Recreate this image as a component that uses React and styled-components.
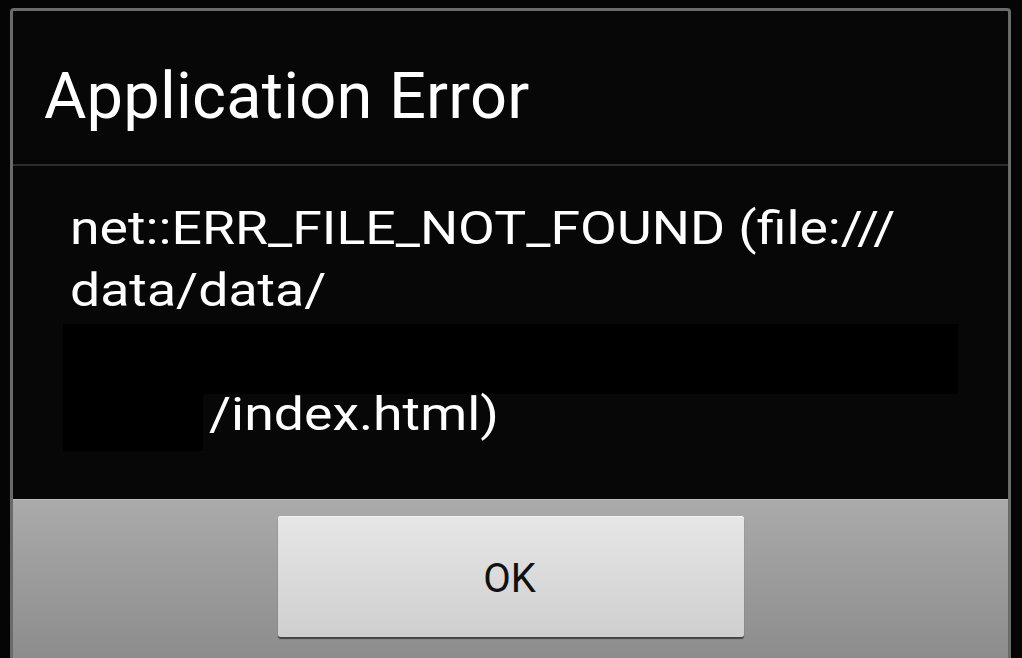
import React from "react";
import styled, { createGlobalStyle } from "styled-components";

const Global = createGlobalStyle`
  html, body {
    margin: 0;
    padding: 0;
    height: 100%;
    overflow: hidden;
    background: #050505;
  }
  body {
    font-family: Roboto, "Noto Sans", "Liberation Sans", sans-serif;
  }
`;

const Screen = styled.div`
  width: 1022px;
  height: 658px;
  padding: 8px 11px 0 10px;
  box-sizing: border-box;
  background: #050505;
  overflow: hidden;
`;

const Dialog = styled.div`
  display: flex;
  flex-direction: column;
  border: 3px solid #6b6b6b;
  border-bottom: none;
  border-radius: 4px 4px 0 0;
  background: #070707;
  height: 720px;
  box-sizing: border-box;
`;

const TitleBar = styled.div`
  height: 155px;
  box-sizing: border-box;
  padding: 53px 0 0 31px;
  border-bottom: 2px solid #2c2c2c;
  color: #ffffff;
  font-size: 65px;
  line-height: 1;
  font-weight: 400;
  letter-spacing: 0.2px;
  white-space: nowrap;
`;

const Body = styled.div`
  height: 333px;
  box-sizing: border-box;
  padding: 31px 40px 0 57px;
  color: #ffffff;
  font-size: 46px;
  line-height: 62px;
`;

const Line = styled.div`
  display: flex;
  align-items: flex-start;
  height: 62px;
  white-space: nowrap;
`;

const Text = styled.span`
  display: inline-block;
  transform: scaleX(1.165);
  transform-origin: left center;
  margin-left: ${(p) => p.$indent || 0}px;
`;

const Redact = styled.span`
  display: block;
  flex: none;
  background: #000000;
  width: ${(p) => p.$w}px;
  height: ${(p) => p.$h}px;
  margin-top: ${(p) => p.$top}px;
  margin-left: -7px;
`;

const ButtonPanel = styled.div`
  flex: 1;
  display: flex;
  justify-content: center;
  align-items: flex-start;
  padding-top: 16px;
  border-top: 1px solid #bdbdbd;
  background: linear-gradient(to bottom, #aaaaaa 0px, #8c8c8c 160px, #868686 100%);
`;

const OkButton = styled.button`
  width: 466px;
  height: 121px;
  border: none;
  border-radius: 3px;
  background: linear-gradient(to bottom, #e6e6e6, #cfcfcf);
  box-shadow: 0 2px 1px rgba(40, 40, 40, 0.75), inset 0 1px 0 #f2f2f2;
  font-family: Roboto, "Noto Sans", "Liberation Sans", sans-serif;
  font-size: 40px;
  color: #111111;
  padding: 4px 2px 0 0;
  cursor: pointer;
`;

export default function App() {
  return (
    <>
      <Global />
      <Screen>
        <Dialog>
          <TitleBar>Application Error</TitleBar>
          <Body>
            <Line>
              <Text>net::ERR_FILE_NOT_FOUND (file:///</Text>
            </Line>
            <Line>
              <Text>data/data/</Text>
            </Line>
            <Line>
              <Redact $w={895} $h={70} $top={3} />
            </Line>
            <Line>
              <Redact $w={140} $h={57} $top={11} />
              <Text $indent={6}>/index.html)</Text>
            </Line>
          </Body>
          <ButtonPanel>
            <OkButton>OK</OkButton>
          </ButtonPanel>
        </Dialog>
      </Screen>
    </>
  );
}
